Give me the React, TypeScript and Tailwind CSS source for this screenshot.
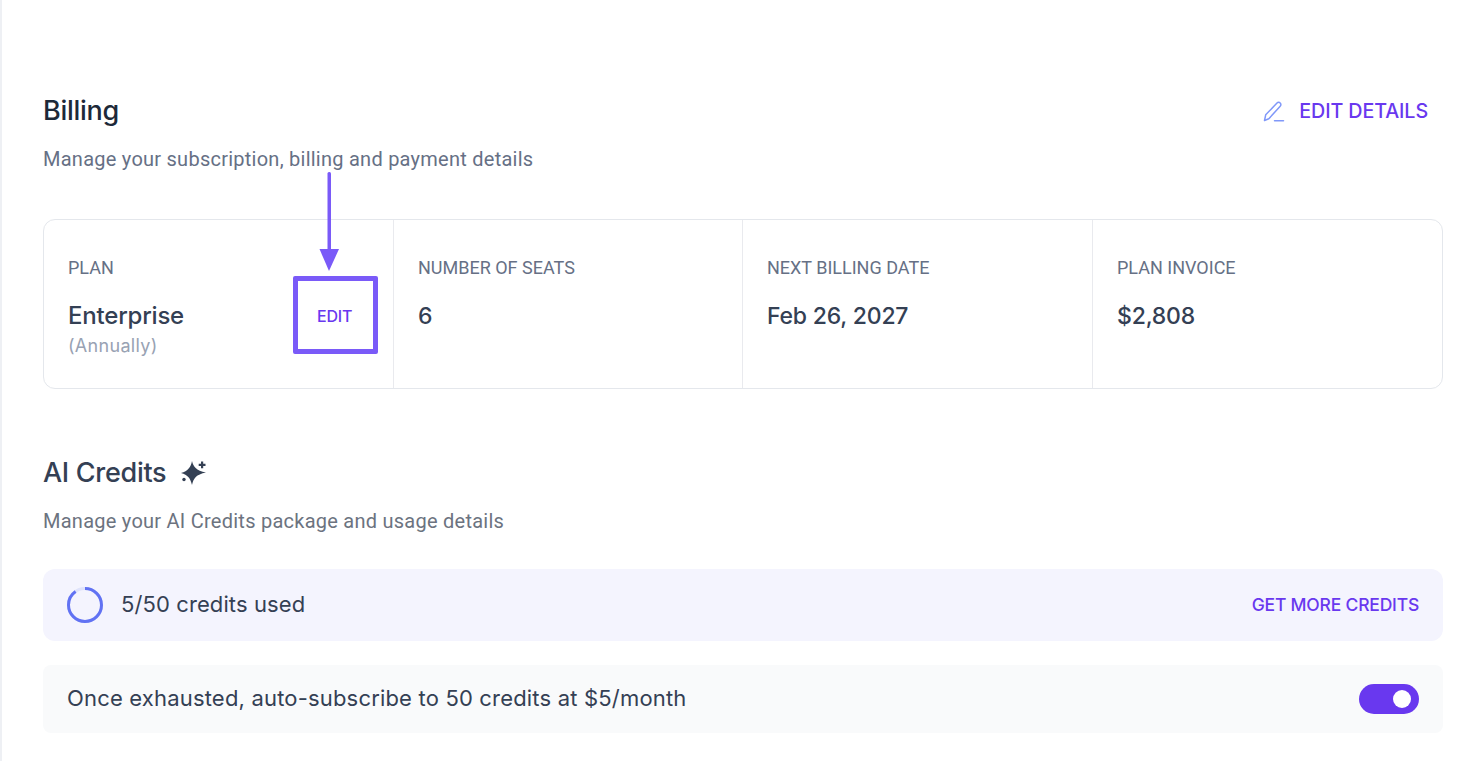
import React from "react";

const inter = "font-['Inter',sans-serif]";
const roboto = "font-['Roboto',sans-serif]";

function Stat({ label, value, last }: { label: string; value: string; last?: boolean }) {
  return (
    <div className={`pl-6 pt-[38px] ${last ? "" : "border-r border-[#e9eaee]"}`}>
      <div className={`${roboto} text-[18px] leading-5 text-[#667085]`}>{label}</div>
      <div className={`${inter} mt-[24px] text-[23px] leading-7 font-medium tracking-[-0.2px] text-[#344054]`}>{value}</div>
    </div>
  );
}

export default function App() {
  return (
    <div className="relative h-[761px] w-[1483px] overflow-hidden border-l-2 border-[#eef0f4] bg-white">
      <div className="pl-[41px] pr-10 pt-[94px]">
        <div className="flex h-8 items-center justify-between">
          <h1 className={`${inter} mt-[1px] text-[27px] leading-8 font-medium tracking-[-0.3px] text-[#1d2939]`}>Billing</h1>
          <button className={`${inter} mr-[15px] mt-[2px] flex items-center gap-[14px] text-[19.700px] leading-7 font-medium tracking-[-0.1px] text-[#6938ef]`}>
            <svg width="22" height="21" viewBox="0 0 22 21" fill="none" stroke="#8098f9" strokeWidth="1.500" strokeLinecap="round" strokeLinejoin="round">
              <path d="M1.500 19.500 2.700 13.800 14 2a2.200 2.200 0 0 1 3.200 0 2.200 2.200 0 0 1 0 3.200L5.800 17.800 1.500 19.500Z" />
              <path d="M11.500 19.700H20.500" />
            </svg>
            EDIT DETAILS
          </button>
        </div>
        <p className={`${roboto} mt-[21px] text-[20px] leading-6 tracking-[0.25px] text-[#667085]`}>Manage your subscription, billing and payment details</p>

        <div className="mt-[48px] grid h-[170px] grid-cols-[350px_349px_350px_1fr] rounded-xl border border-[#e4e7ec]">
          <div className="relative border-r border-[#e9eaee] pl-6 pt-[38px]">
            <div className={`${roboto} text-[18px] leading-5 text-[#667085]`}>PLAN</div>
            <div className={`${inter} mt-[24px] text-[24px] leading-7 font-medium tracking-[-0.2px] text-[#344054]`}>Enterprise</div>
            <div className={`${inter} mt-[4px] text-[18px] leading-6 tracking-[0.3px] text-[#98a2b3]`}>(Annually)</div>
            <div className={`${inter} absolute left-[273px] top-[84px] text-base leading-6 font-medium tracking-[-0.2px] text-[#6938ef]`}>EDIT</div>
          </div>
          <Stat label="NUMBER OF SEATS" value="6" />
          <Stat label="NEXT BILLING DATE" value="Feb 26, 2027" />
          <Stat label="PLAN INVOICE" value="$2,808" last />
        </div>

        <div className="mt-[68px] flex h-8 items-center gap-[14px]">
          <h2 className={`${inter} text-[27px] leading-8 font-medium tracking-[-0.3px] text-[#344054]`}>AI Credits</h2>
          <svg width="27" height="26" viewBox="0 0 27 26" fill="#344054">
            <path d="M12 1C13.200 6.500 16 10.500 26 12.500 16 14.500 13.500 18.500 12 25 10.500 18.500 8 15 1 13 8 11 10.800 7 12 1Z" />
            <path d="M21 1.500h2.200v2.300h2.300V6h-2.300v2.300H21V6h-2.300V3.800H21Z" stroke="#ffffff" strokeWidth="1" paintOrder="stroke" />
            <circle cx="4" cy="19.500" r="1.700" />
          </svg>
        </div>
        <p className={`${roboto} mt-[20px] text-[20px] leading-6 tracking-[0.25px] text-[#6c737f]`}>Manage your AI Credits package and usage details</p>

        <div className="mt-[36px] flex h-[72px] items-center justify-between rounded-xl bg-[#f4f4fe] pl-6 pr-6">
          <div className="flex items-center gap-[18px]">
            <svg width="36" height="36" viewBox="0 0 36 36" fill="none" strokeWidth="3">
              <circle cx="18" cy="18" r="16.500" stroke="#dfe3fb" />
              <circle cx="18" cy="18" r="16.500" stroke="#6172f3" strokeDasharray="93 103.700" transform="rotate(-90 18 18)" />
            </svg>
            <span className={`${inter} -mt-[2px] text-[22px] leading-7 tracking-[0.1px] text-[#344054]`}>5/50 credits used</span>
          </div>
          <button className={`${inter} text-[17.500px] font-medium tracking-[-0.2px] text-[#6938ef]`}>GET MORE CREDITS</button>
        </div>

        <div className="mt-6 flex h-[68px] items-center justify-between rounded-lg bg-[#f9fafb] pl-6 pr-6">
          <span className={`${inter} -mt-[2px] text-[22px] leading-7 tracking-[0.18px] text-[#344054]`}>Once exhausted, auto-subscribe to 50 credits at $5/month</span>
          <div className="flex h-[30px] w-[60px] items-center justify-end rounded-full bg-[#6938ef] pr-[8px]">
            <div className="h-[18px] w-[18px] rounded-full bg-white" />
          </div>
        </div>
      </div>

      <div className="absolute left-[291px] top-[276px] h-[78px] w-[85px] rounded-[2px] border-[5px] border-[#7a5af8]" />
      <svg className="absolute left-[316px] top-[171px]" width="24" height="102" viewBox="0 0 24 102" fill="#7a5af8">
        <rect x="9.500" y="1" width="3.500" height="80" rx="1.500" />
        <path d="M1.500 78H21L11 100Z" />
      </svg>
    </div>
  );
}
